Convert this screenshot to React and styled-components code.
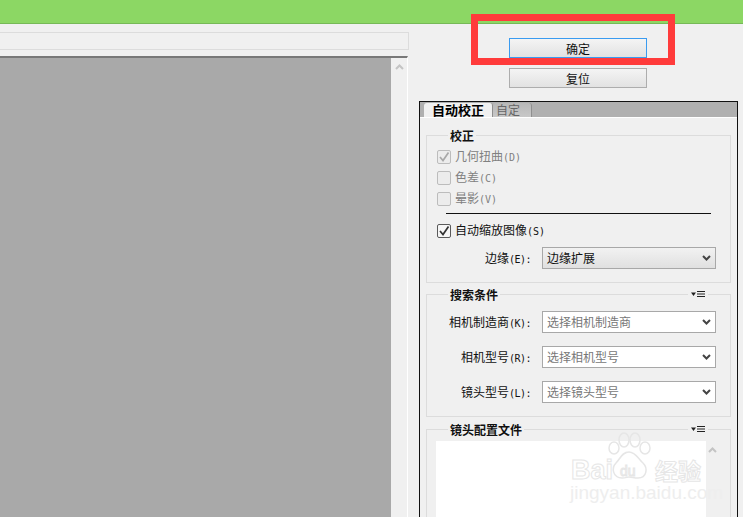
import React from "react";
import styled, { createGlobalStyle } from "styled-components";

const GlobalStyle = createGlobalStyle`
  html, body {
    margin: 0;
    padding: 0;
    background: #f0f0f0;
    overflow: hidden;
  }
  * {
    box-sizing: border-box;
  }
`;

const Page = styled.div`
  position: relative;
  width: 743px;
  height: 517px;
  overflow: hidden;
  background: #f0f0f0;
  color: #111;
  font-family: "Noto Sans CJK SC", "Liberation Sans", sans-serif;
  font-size: 12px;
`;

const TitleBar = styled.div`
  height: 24px;
  background: #8cd764;
  border-bottom: 1px solid #76b957;
`;

const Main = styled.div`
  display: flex;
  height: 493px;
`;

const LeftColumn = styled.div`
  width: 409px;
  padding-top: 8px;
  flex-shrink: 0;
`;

const PathField = styled.div`
  height: 18px;
  border: 1px solid #dcdcdc;
  border-left: 0;
  margin-bottom: 6px;
`;

const PreviewFrame = styled.div`
  display: flex;
  height: 461px;
  width: 408px;
  border-top: 2px solid #787878;
  border-right: 1px solid #fff;
`;

const PreviewArea = styled.div`
  flex: 1;
  background: #a9a9a9;
`;

const ScrollTrack = styled.div`
  width: 16px;
  padding: 6px 0 0 ${(p) => p.$inset || 4}px;
  color: #c4c4c4;
`;

const RightColumn = styled.div`
  flex: 1;
  padding: 14px 0 0 10px;
`;

const ButtonStack = styled.div`
  display: flex;
  flex-direction: column;
  gap: 10px;
  padding-left: 90px;
  margin-bottom: 13px;
`;

const ActionButton = styled.div`
  width: 138px;
  height: 20px;
  display: flex;
  align-items: center;
  justify-content: center;
  border: 1px solid ${(p) => (p.$focused ? "#3a9bf0" : "#adadad")};
  background: linear-gradient(#f4f4f4, #e2e2e2);
`;

const Panel = styled.div`
  width: 319px;
  height: 420px;
  border: 1px solid #111;
  border-bottom: 0;
  overflow: hidden;
`;

const TabStrip = styled.div`
  display: flex;
  align-items: flex-end;
  height: 16px;
  padding-left: 4px;
  background: #b0b0b0;
  border-bottom: 1px solid #fff;
`;

const Tab = styled.div`
  width: ${(p) => (p.$active ? 69 : 39)}px;
  height: 14px;
  line-height: 14px;
  padding-left: ${(p) => (p.$active ? 8 : 3)}px;
  border-radius: 3px 3px 0 0;
  background: ${(p) => (p.$active ? "#f0f0f0" : "linear-gradient(#b8b8b8, #c8c8c8)")};
  border-right: 1px solid #8f8f8f;
  color: ${(p) => (p.$active ? "#000" : "#666")};
  font-size: ${(p) => (p.$active ? 13 : 12)}px;
  font-weight: ${(p) => (p.$active ? 700 : 400)};
`;

const PanelBody = styled.div`
  padding: 17px 6px 0;
  display: flex;
  flex-direction: column;
`;

const Group = styled.div`
  position: relative;
  width: 305px;
  height: ${(p) => p.$height}px;
  margin-bottom: ${(p) => p.$gap || 0}px;
  padding-top: ${(p) => p.$top}px;
  border: 1px solid #dcdcdc;
  flex-shrink: 0;
`;

const Legend = styled.div`
  position: absolute;
  top: -8px;
  left: 21px;
  padding: 0 2px;
  line-height: 16px;
  background: #f0f0f0;
  font-weight: 700;
`;

const MenuIcon = styled.svg`
  position: absolute;
  top: -4px;
  right: 22px;
  padding: 0 3px;
  box-sizing: content-box;
  background: #f0f0f0;
`;

const CheckRow = styled.div`
  display: flex;
  align-items: center;
  gap: 4px;
  height: 21px;
  padding-left: 10px;
  color: ${(p) => (p.$disabled ? "#808080" : "#111")};
`;

const Box = styled.div`
  width: 14px;
  height: 14px;
  display: flex;
  align-items: center;
  justify-content: center;
  border: 1px solid ${(p) => (p.$disabled ? "#bcbcbc" : "#5a5a5a")};
  border-radius: 2px;
  background: ${(p) => (p.$disabled ? "#ececec" : "#f6f6f6")};
  color: ${(p) => (p.$disabled ? "#a8a8a8" : "#333")};
`;

const BoxText = styled.span`
  padding-bottom: 3px;
`;

const HotKey = styled.span`
  font-family: "DejaVu Sans Mono", "Liberation Mono", monospace;
  font-size: 10px;
  letter-spacing: ${(p) => p.$tight || 0}px;
`;

const Divider = styled.div`
  height: 1px;
  margin: 4px 19px 6px 19px;
  background: #111;
`;

const FormRow = styled.div`
  display: grid;
  grid-template-columns: 104px 174px;
  column-gap: 11px;
  align-items: center;
  margin-bottom: ${(p) => p.$gap || 0}px;
  margin-top: ${(p) => p.$top || 0}px;
`;

const FormLabel = styled.div`
  text-align: right;
  padding-bottom: 2px;
`;

const Select = styled.div`
  height: 22px;
  display: flex;
  align-items: center;
  justify-content: space-between;
  padding: 0 4px;
  border: 1px solid #a8a8a8;
  background: ${(p) => (p.$filled ? "linear-gradient(#f2f2f2, #e0e0e0)" : "#fff")};
  color: ${(p) => (p.$filled ? "#111" : "#777")};
`;

const SelectText = styled.span`
  padding-bottom: 2px;
`;

const SelectArrow = styled.span`
  color: #444;
`;

const ProfileRow = styled.div`
  display: flex;
  padding-left: 9px;
`;

const ProfileList = styled.div`
  width: 270px;
  height: 120px;
  background: #fff;
`;

const RedFrame = styled.div`
  position: absolute;
  left: 471px;
  top: 14px;
  width: 204px;
  height: 51px;
  border: 7px solid #ff3b3b;
`;

const Watermark = styled.div`
  position: absolute;
  left: 568px;
  top: 432px;
  width: 140px;
  height: 75px;
  color: #fff;
  pointer-events: none;
`;

const PawSvg = styled.svg`
  position: absolute;
  left: 40px;
  top: 0;
`;

const Brand = styled.span`
  position: absolute;
  left: ${(p) => p.$left}px;
  top: ${(p) => p.$top}px;
  font-family: ${(p) => (p.$cjk ? '"Noto Sans CJK SC"' : '"Liberation Sans"')}, sans-serif;
  font-size: ${(p) => p.$size}px;
  font-weight: ${(p) => p.$weight || 700};
  line-height: ${(p) => p.$line}px;
  white-space: nowrap;
  -webkit-text-stroke: 1px #e6e6e6;
`;

const Site = styled.span`
  position: absolute;
  left: 2px;
  top: 51px;
  font-family: "Liberation Sans", sans-serif;
  font-size: 19px;
  line-height: 20px;
  white-space: nowrap;
  color: #eeeeee;
`;

const Chevron = ({ up }) => (
  <svg width="9" height="6" viewBox="0 0 9 6" style={{ display: "block" }}>
    <path
      d={up ? "M1 5 L4.5 1.5 L8 5" : "M1 1 L4.5 4.5 L8 1"}
      fill="none"
      stroke="currentColor"
      strokeWidth="2"
    />
  </svg>
);

const Check = () => (
  <svg width="12" height="12" viewBox="0 0 12 12">
    <path d="M2 6 L5 9.5 L10.5 1.5" fill="none" stroke="currentColor" strokeWidth="1.7" />
  </svg>
);

const GroupMenu = () => (
  <MenuIcon width="14" height="7" viewBox="0 0 14 7">
    <path d="M0 1.5 H5 L2.5 5 Z" fill="#222" />
    <path d="M6 .5 H14 M6 3 H14 M6 5.5 H14" stroke="#222" strokeWidth="1" />
  </MenuIcon>
);

const CheckItem = ({ text, hotKey, checked, disabled }) => (
  <CheckRow $disabled={disabled}>
    <Box $disabled={disabled}>{checked && <Check />}</Box>
    <BoxText>
      {text}
      <HotKey>({hotKey})</HotKey>
    </BoxText>
  </CheckRow>
);

const Field = ({ label, hotKey, value, filled, top, gap }) => (
  <FormRow $top={top} $gap={gap}>
    <FormLabel>
      {label}
      <HotKey $tight={-0.5}>({hotKey}):</HotKey>
    </FormLabel>
    <Select $filled={filled}>
      <SelectText>{value}</SelectText>
      <SelectArrow>
        <Chevron />
      </SelectArrow>
    </Select>
  </FormRow>
);

export default function App() {
  return (
    <Page>
      <GlobalStyle />
      <TitleBar />
      <Main>
        <LeftColumn>
          <PathField />
          <PreviewFrame>
            <PreviewArea />
            <ScrollTrack>
              <Chevron up />
            </ScrollTrack>
          </PreviewFrame>
        </LeftColumn>
        <RightColumn>
          <ButtonStack>
            <ActionButton $focused>确定</ActionButton>
            <ActionButton>复位</ActionButton>
          </ButtonStack>
          <Panel>
            <TabStrip>
              <Tab $active>自动校正</Tab>
              <Tab>自定</Tab>
            </TabStrip>
            <PanelBody>
              <Group $height={148} $top={10} $gap={11}>
                <Legend>校正</Legend>
                <CheckItem text="几何扭曲" hotKey="D" checked disabled />
                <CheckItem text="色差" hotKey="C" disabled />
                <CheckItem text="晕影" hotKey="V" disabled />
                <Divider />
                <CheckItem text="自动缩放图像" hotKey="S" checked />
                <Field label="边缘" hotKey="E" value="边缘扩展" filled top={6} />
              </Group>
              <Group $height={123} $top={16} $gap={12}>
                <Legend>搜索条件</Legend>
                <GroupMenu />
                <Field label="相机制造商" hotKey="K" value="选择相机制造商" gap={13} />
                <Field label="相机型号" hotKey="R" value="选择相机型号" gap={13} />
                <Field label="镜头型号" hotKey="L" value="选择镜头型号" />
              </Group>
              <Group $height={120} $top={11}>
                <Legend>镜头配置文件</Legend>
                <GroupMenu />
                <ProfileRow>
                  <ProfileList />
                  <ScrollTrack $inset={2}>
                    <Chevron up />
                  </ScrollTrack>
                </ProfileRow>
              </Group>
            </PanelBody>
          </Panel>
        </RightColumn>
      </Main>
      <RedFrame />
      <Watermark>
        <PawSvg width="44" height="52" viewBox="0 0 44 52">
          <g fill="none" stroke="#e6e6e6" strokeWidth="1.5">
            <ellipse cx="6" cy="16" rx="5" ry="6" />
            <ellipse cx="16" cy="8" rx="5" ry="7" />
            <ellipse cx="27" cy="8" rx="5" ry="7" />
            <ellipse cx="37" cy="16" rx="5" ry="6" />
            <path d="M21 20 C14 20 12 27 8 31 C3 36 5 46 14 46 C18 46 19 45 21 45 C24 45 26 46 30 46 C39 46 40 36 35 31 C30 27 28 20 21 20 Z" />
          </g>
        </PawSvg>
        <Brand $left={3} $top={26} $size={27} $line={24}>Bai</Brand>
        <Brand $left={52} $top={31} $size={14} $weight={400} $line={16}>du</Brand>
        <Brand $left={87} $top={26} $size={23} $line={24} $cjk>经验</Brand>
        <Site>jingyan.baidu.com</Site>
      </Watermark>
    </Page>
  );
}
